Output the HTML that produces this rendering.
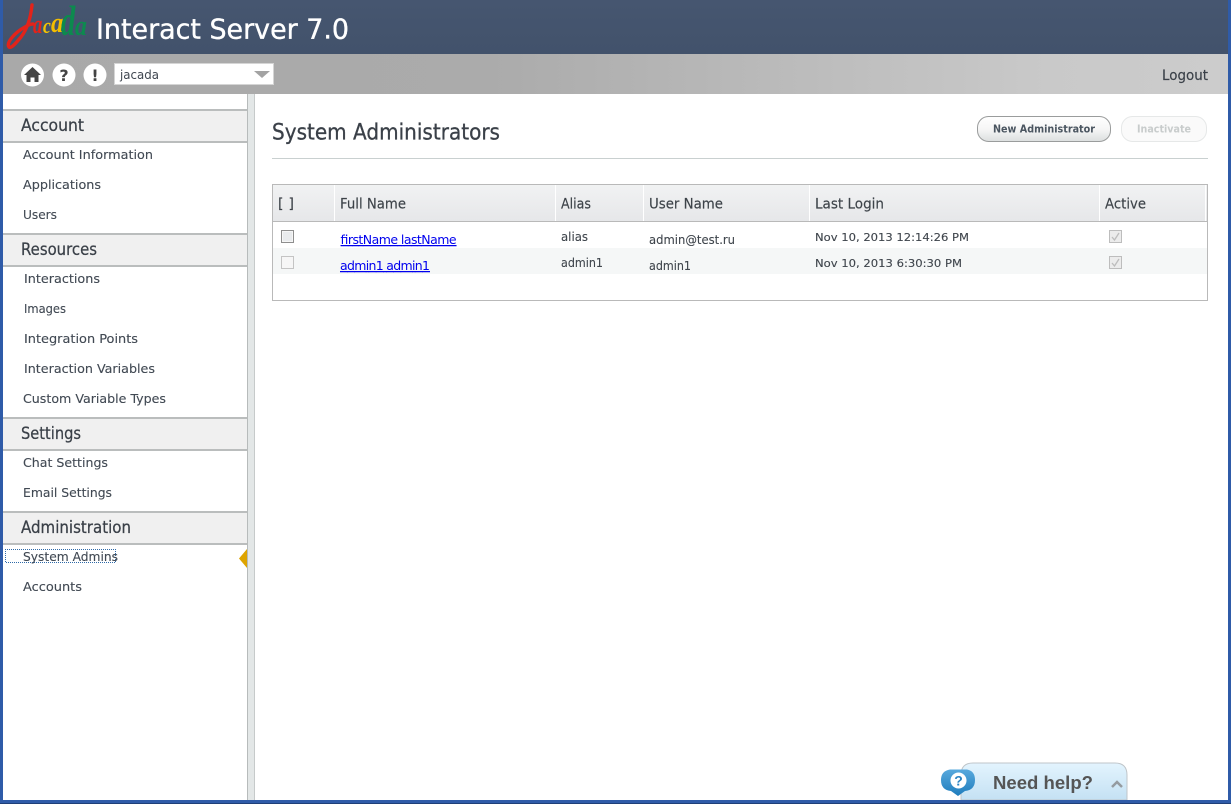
<!DOCTYPE html>
<html lang="en"><head><meta charset="utf-8"><title>Interact Server 7.0 - System Administrators</title>
<style>
html,body{margin:0;padding:0;background:#fff;overflow:hidden;width:1231px;height:804px}
svg{display:block}
text{font-family:"DejaVu Sans","Liberation Sans",sans-serif;fill:#444c55;font-size:13px}
.h{font-size:17px;fill:#3a4048;stroke:#3a4048;stroke-width:.25px}
.i{font-size:12.5px;fill:#414953;stroke:#414953;stroke-width:.12px}
.th{font-size:14px;fill:#3d4349;stroke:#3d4349;stroke-width:.15px}
.td{font-size:12px;fill:#3f454c;stroke:#3f454c;stroke-width:.1px}
.dt{font-size:11px;fill:#3f454c;stroke:#3f454c;stroke-width:.12px}
.lnk{font-size:12.5px;fill:#0000ee;text-decoration:underline}
.logo{font-family:"Liberation Serif",serif;font-style:italic;font-weight:bold}
</style></head><body>
<svg width="1231" height="804" viewBox="0 0 1231 804" xmlns="http://www.w3.org/2000/svg">
<defs>
<linearGradient id="top" x1="0" y1="0" x2="0" y2="1"><stop offset="0" stop-color="#465670"/><stop offset="1" stop-color="#42526b"/></linearGradient>
<linearGradient id="bar" x1="0" y1="0" x2="1" y2="0"><stop offset="0" stop-color="#a9a9a9"/><stop offset=".4" stop-color="#ababab"/><stop offset=".85" stop-color="#c9c9c9"/><stop offset="1" stop-color="#cccccc"/></linearGradient>
<linearGradient id="th" x1="0" y1="0" x2="0" y2="1"><stop offset="0" stop-color="#f1f2f3"/><stop offset="1" stop-color="#e6e7e9"/></linearGradient>
<linearGradient id="btn" x1="0" y1="0" x2="0" y2="1"><stop offset="0" stop-color="#ffffff"/><stop offset=".5" stop-color="#f6f6f6"/><stop offset="1" stop-color="#dcdfdf"/></linearGradient>
<linearGradient id="help" x1="0" y1="0" x2="0" y2="1"><stop offset="0" stop-color="#e3f4fe"/><stop offset="1" stop-color="#c4e1f3"/></linearGradient>
<linearGradient id="bub" x1="0" y1="0" x2="0" y2="1"><stop offset="0" stop-color="#58a9dd"/><stop offset="1" stop-color="#1f7dbd"/></linearGradient>
<pattern id="dots" width="2" height="2" patternUnits="userSpaceOnUse"><rect width="1" height="1" fill="#2f6aa8"/><rect x="1" y="1" width="1" height="1" fill="#2f6aa8"/></pattern>
</defs>

<rect width="1231" height="804" fill="#fff"/>
<!-- header -->
<rect width="1231" height="54" fill="url(#top)"/>
<rect y="54" width="1231" height="40" fill="url(#bar)"/>

<!-- logo -->
<path d="M32 5 C31 15 28 28 21 37 C16 43 11 49 9 47 C6 43 14 33 25 27 C28 25 31 24 33 24" fill="none" stroke="#e2231a" stroke-width="3.4" stroke-linecap="round" stroke-linejoin="round"/>
<text class="logo" transform="translate(33,33) scale(.72,1)" style="font-size:26px;fill:#e2231a">a</text>
<text class="logo" transform="translate(43,33) scale(.8,1)" style="font-size:22px;fill:#f5c400">c</text>
<text class="logo" transform="translate(51,32) scale(.85,1)" style="font-size:29px;fill:#f2bd00">a</text>
<text class="logo" transform="translate(61,35) scale(.68,1)" style="font-size:42px;fill:#0c8a4e">d</text>
<text class="logo" transform="translate(75,35) scale(.85,1)" style="font-size:28px;fill:#0c8a4e">a</text>

<text x="96" y="38.500" textLength="253" lengthAdjust="spacingAndGlyphs" style="font-size:27.500px;fill:#fff;stroke:#fff;stroke-width:.35px">Interact Server 7.0</text>

<!-- toolbar icons -->
<circle cx="32.500" cy="75" r="11.500" fill="#fff"/>
<path d="M32.500 67 L24 75 H26.500 V82 H30.500 V77.500 H34.500 V82 H38.500 V75 H41 Z" fill="#444"/>
<circle cx="64" cy="75" r="11.500" fill="#fff"/>
<text x="64" y="81" text-anchor="middle" style="font-size:16px;font-weight:bold;fill:#444">?</text>
<circle cx="95" cy="75" r="11.500" fill="#fff"/>
<text x="95" y="81" text-anchor="middle" style="font-size:16px;font-weight:bold;fill:#444">!</text>
<rect x="114.500" y="63.500" width="159" height="21" fill="#fff" stroke="#d5d5d5"/>
<text x="120" y="79" textLength="39" lengthAdjust="spacingAndGlyphs" style="font-size:12.500px;fill:#3f4650">jacada</text>
<path d="M254 71 H270 L262 78 Z" fill="#a3a3a3"/>
<text x="1162" y="80" textLength="46" lengthAdjust="spacingAndGlyphs" style="font-size:14px;fill:#3a4048;stroke:#3a4048;stroke-width:.15px">Logout</text>

<!-- sidebar -->
<rect x="247" y="94" width="8" height="706" fill="#e3e7e7"/>
<rect x="247" y="94" width="1" height="706" fill="#b7bbbb"/>
<rect x="254" y="94" width="1" height="706" fill="#c6caca"/>

<rect x="3" y="109" width="244" height="34" fill="#f0f0f0"/><rect x="3" y="109" width="244" height="2" fill="#babdbd"/><rect x="3" y="141" width="244" height="2" fill="#babdbd"/>
<rect x="3" y="233" width="244" height="34" fill="#f0f0f0"/><rect x="3" y="233" width="244" height="2" fill="#babdbd"/><rect x="3" y="265" width="244" height="2" fill="#babdbd"/>
<rect x="3" y="417" width="244" height="34" fill="#f0f0f0"/><rect x="3" y="417" width="244" height="2" fill="#babdbd"/><rect x="3" y="449" width="244" height="2" fill="#babdbd"/>
<rect x="3" y="511" width="244" height="34" fill="#f0f0f0"/><rect x="3" y="511" width="244" height="2" fill="#babdbd"/><rect x="3" y="543" width="244" height="2" fill="#babdbd"/>

<text class="h" x="21" y="131" textLength="63" lengthAdjust="spacingAndGlyphs">Account</text>
<text class="h" x="21" y="255" textLength="76" lengthAdjust="spacingAndGlyphs">Resources</text>
<text class="h" x="21" y="439" textLength="60" lengthAdjust="spacingAndGlyphs">Settings</text>
<text class="h" x="21" y="533" textLength="110" lengthAdjust="spacingAndGlyphs">Administration</text>

<text class="i" x="23" y="159" textLength="130" lengthAdjust="spacingAndGlyphs">Account Information</text>
<text class="i" x="23" y="189" textLength="78" lengthAdjust="spacingAndGlyphs">Applications</text>
<text class="i" x="23" y="219" textLength="34" lengthAdjust="spacingAndGlyphs">Users</text>
<text class="i" x="24" y="283" textLength="76" lengthAdjust="spacingAndGlyphs">Interactions</text>
<text class="i" x="24" y="313" textLength="42" lengthAdjust="spacingAndGlyphs">Images</text>
<text class="i" x="24" y="343" textLength="114" lengthAdjust="spacingAndGlyphs">Integration Points</text>
<text class="i" x="24" y="373" textLength="131" lengthAdjust="spacingAndGlyphs">Interaction Variables</text>
<text class="i" x="23" y="403" textLength="143" lengthAdjust="spacingAndGlyphs">Custom Variable Types</text>
<text class="i" x="23" y="467" textLength="85" lengthAdjust="spacingAndGlyphs">Chat Settings</text>
<text class="i" x="23" y="497" textLength="89" lengthAdjust="spacingAndGlyphs">Email Settings</text>
<path d="M5 549 H116 V563 H5 Z M6 550 V562 H115 V550 Z" fill="url(#dots)" fill-rule="evenodd"/>
<text class="i" x="23" y="561" textLength="95" lengthAdjust="spacingAndGlyphs">System Admins</text>
<text class="i" x="23" y="591" textLength="59" lengthAdjust="spacingAndGlyphs">Accounts</text>
<path d="M247 549 L239 558.500 L247 568 Z" fill="#dea400"/>

<!-- heading -->
<text x="272" y="139.500" textLength="228" lengthAdjust="spacingAndGlyphs" style="font-size:22.500px;fill:#3a4048;stroke:#3a4048;stroke-width:.3px">System Administrators</text>
<rect x="272" y="158" width="936" height="1" fill="#c9d0d0"/>

<rect x="977.500" y="116.500" width="133" height="25" rx="11" fill="url(#btn)" stroke="#9a9c9c"/>
<text x="993" y="132.500" textLength="102" lengthAdjust="spacingAndGlyphs" style="font-size:11px;font-weight:bold;fill:#4a5560">New Administrator</text>
<rect x="1121.500" y="116.500" width="85" height="25" rx="11" fill="#fafafa" stroke="#e6e8e8"/>
<text x="1137" y="132.500" textLength="54" lengthAdjust="spacingAndGlyphs" style="font-size:11px;font-weight:bold;fill:#c8cccc">Inactivate</text>

<!-- table -->
<rect x="272.500" y="184.500" width="935" height="116" fill="#fff" stroke="#b9b9b9"/>
<rect x="273" y="185" width="934" height="36" fill="url(#th)"/>
<rect x="273" y="221" width="934" height="1" fill="#b9b9b9"/>
<rect x="273" y="248" width="934" height="26" fill="#f5f7f7"/>
<rect x="334" y="185" width="1" height="36" fill="#fff"/>
<rect x="555" y="185" width="1" height="36" fill="#fff"/>
<rect x="643" y="185" width="1" height="36" fill="#fff"/>
<rect x="809" y="185" width="1" height="36" fill="#fff"/>
<rect x="1099" y="185" width="1" height="36" fill="#fff"/>
<rect x="1205" y="185" width="1" height="36" fill="#fff"/>

<text class="th" x="278" y="208.500" textLength="16" lengthAdjust="spacing">[ ]</text>
<text class="th" x="340" y="208.500" textLength="66" lengthAdjust="spacingAndGlyphs">Full Name</text>
<text class="th" x="561" y="208.500" textLength="30" lengthAdjust="spacingAndGlyphs">Alias</text>
<text class="th" x="649" y="208.500" textLength="74" lengthAdjust="spacingAndGlyphs">User Name</text>
<text class="th" x="815" y="208.500" textLength="69" lengthAdjust="spacingAndGlyphs">Last Login</text>
<text class="th" x="1105" y="208.500" textLength="41" lengthAdjust="spacingAndGlyphs">Active</text>

<rect x="281.500" y="230.500" width="12" height="12" fill="#f6f6f6" stroke="#8e8e8e"/><rect x="283" y="232" width="9" height="9" fill="#e9ebed"/>
<rect x="281.500" y="256.500" width="12" height="12" fill="#f6f6f6" stroke="#c4c4c4"/>
<rect x="1109.500" y="230.500" width="12" height="12" fill="#ececec" stroke="#bdbdbd"/><path d="M1112 237 L1114.500 240 L1119 233" fill="none" stroke="#bdbdbd" stroke-width="1.300"/>
<rect x="1109.500" y="256.500" width="12" height="12" fill="#ececec" stroke="#bdbdbd"/><path d="M1112 263 L1114.500 266 L1119 259" fill="none" stroke="#bdbdbd" stroke-width="1.300"/>

<text class="lnk" x="340" y="244" textLength="116" lengthAdjust="spacing">firstName lastName</text>
<text class="td" x="561" y="241" textLength="27" lengthAdjust="spacingAndGlyphs">alias</text>
<text class="td" x="649" y="244" textLength="86" lengthAdjust="spacingAndGlyphs">admin@test.ru</text>
<text class="dt" x="815" y="241" textLength="154" lengthAdjust="spacingAndGlyphs">Nov 10, 2013 12:14:26 PM</text>
<text class="lnk" x="340" y="270" textLength="90" lengthAdjust="spacing">admin1 admin1</text>
<text class="td" x="561" y="267" textLength="42" lengthAdjust="spacingAndGlyphs">admin1</text>
<text class="td" x="649" y="270" textLength="42" lengthAdjust="spacingAndGlyphs">admin1</text>
<text class="dt" x="815" y="267" textLength="147" lengthAdjust="spacingAndGlyphs">Nov 10, 2013 6:30:30 PM</text>

<!-- need help -->
<path d="M961 800 V775 Q961 763 973 763 H1115 Q1127 763 1127 775 V800 Z" fill="url(#help)" stroke="#bfc5c9" stroke-width="1"/>
<path d="M950 769.500 H967 Q975 771 975 780 Q975 790 965 791 L958 796 L951 791 Q941 790 941 780 Q941 771 950 769.500 Z" fill="url(#bub)"/>
<circle cx="958.500" cy="780.500" r="8" fill="#fff"/>
<text x="958.500" y="785.500" text-anchor="middle" style="font-family:'Liberation Sans',sans-serif;font-size:14px;font-weight:bold;fill:#2a83c2">?</text>
<text x="993" y="789" textLength="100" lengthAdjust="spacingAndGlyphs" style="font-family:'Liberation Sans',sans-serif;font-size:18px;font-weight:bold;fill:#555">Need help?</text>
<path d="M1112 787 L1117 782 L1122 787" fill="none" stroke="#959ba0" stroke-width="2.500"/>

<!-- window frame -->
<rect x="0" y="0" width="3" height="804" fill="#2f5ba8"/>
<rect x="1228" y="0" width="3" height="804" fill="#2f5ba8"/>
<rect x="0" y="800" width="1231" height="4" fill="#2f5ba8"/>
<rect x="0" y="803" width="1231" height="1" fill="#1f3f78"/>
</svg>
</body></html>
